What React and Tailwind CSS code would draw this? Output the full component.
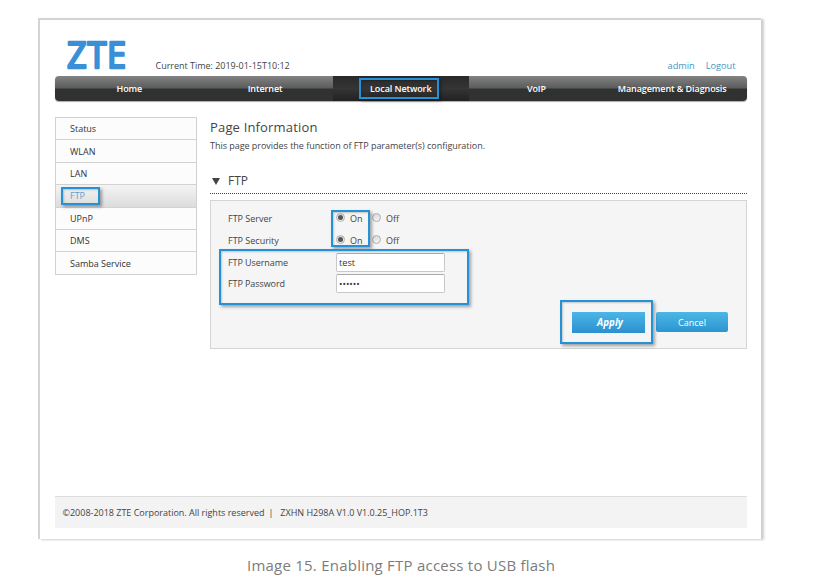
import { useState } from "react";

const tabs = ["Home", "Internet", "Local Network", "VoIP", "Management & Diagnosis"];
const menu = ["Status", "WLAN", "LAN", "FTP", "UPnP", "DMS", "Samba Service"];

// Blue callout frame laid over the part of the page being explained
function Callout({ className }) {
  return (
    <div
      className={`pointer-events-none absolute border-2 border-[#2492d8] shadow-[2px_2px_3px_rgba(0,0,0,0.35),inset_1px_1px_2px_rgba(0,0,0,0.2)] ${className}`}
    />
  );
}

function Logo() {
  return (
    <svg width="72" height="54" viewBox="0 0 72 54" className="block overflow-visible">
      <text
        x="0 22 43"
        y="39.5"
        transform="scale(0.93 1)"
        fontFamily="Open Sans, sans-serif"
        fontSize="37"
        fontWeight="400"
        fill="#3a8fd6"
        stroke="#3a8fd6"
        strokeWidth="2.4"
        strokeLinejoin="round"
      >
        ZTE
      </text>
    </svg>
  );
}

function Radio({ checked, onChange }) {
  return (
    <button
      type="button"
      onClick={onChange}
      className="mb-[3px] flex size-[9px] items-center justify-center rounded-full border border-[#b0b0b0] bg-linear-to-b from-[#dadada] to-[#f4f4f4]"
    >
      {checked && <span className="size-[5px] rounded-full bg-[#555]" />}
    </button>
  );
}

function OnOff({ label }) {
  const [on, setOn] = useState(true);

  return (
    <div className="flex h-[21.7px] items-center">
      <span className="w-[108px]">{label}</span>
      <Radio checked={on} onChange={() => setOn(true)} />
      <span className="ml-[5px] w-[22px]">On</span>
      <Radio checked={!on} onChange={() => setOn(false)} />
      <span className="ml-[5px]">Off</span>
    </div>
  );
}

function Field({ label, type, value }) {
  return (
    <div className="flex h-[21.7px] items-center">
      <span className="w-[108px] tracking-[-0.08px]">{label}</span>
      <input
        type={type}
        defaultValue={value}
        className="h-[19px] w-[109px] rounded-[2px] border border-[#c8c8c8] border-t-[#aaa] bg-white px-[2px] text-[9.2px] text-[#333] outline-none"
      />
    </div>
  );
}

export default function App() {
  return (
    <div className="h-[585px] w-[832px] overflow-hidden bg-white pt-[18px] pl-[38px] font-['Open_Sans','Noto_Sans',sans-serif] text-[9px] leading-none text-[#444]">
      <div className="relative flex h-[521px] w-[723px] flex-col border-t-2 border-l-2 border-[#d4d4d4] bg-white pr-[14px] pl-[14.5px] shadow-[3px_1px_2px_#cfcfcf]">
        <header className="flex h-[56px] shrink-0 items-end pb-[4px]">
          <div className="-mb-[11px] ml-[12px] w-[89px]">
            <Logo />
          </div>
          <span className="mb-[2px] text-[9px] tracking-[-0.02px]">Current Time: 2019-01-15T10:12</span>
          <div className="mr-[11.5px] mb-[2px] ml-auto flex gap-[11px] text-[9.2px] text-[#4596c4]">
            <a>admin</a>
            <a>Logout</a>
          </div>
        </header>

        <nav className="flex h-[25px] shrink-0 rounded-[4px] bg-linear-to-b from-[#838383] from-0% via-[#5c5c5c] via-48% to-[#303231] to-52% px-[7px] text-white shadow-[0_1px_1px_#aaa]">
          {tabs.map((tab) => (
            <a
              key={tab}
              className={`flex flex-1 basis-0 items-center justify-center pb-[1px] font-semibold tracking-[-0.09px] whitespace-nowrap ${
                tab === "Local Network" ? "bg-linear-to-b from-[#292929] via-[#353535] to-[#222]" : ""
              }`}
            >
              {tab}
            </a>
          ))}
        </nav>

        <div className="mt-[16px] flex gap-[13.5px]">
          <aside className="h-[158px] w-[142px] shrink-0 border border-[#d2d2d2] bg-[#fcfcfc]">
            {menu.map((item) => (
              <a
                key={item}
                className={`flex h-[22.4px] items-center border-b border-[#d2d2d2] pl-[14.5px] last:border-b-0 ${
                  item === "FTP" ? "bg-linear-to-b from-[#f4f4f4] to-[#dcdcdc] text-[#5a9fd0]" : "text-[#333]"
                }`}
              >
                {item}
              </a>
            ))}
          </aside>

          <main className="min-w-0 flex-1">
            <h1 className="mt-[3px] text-[13px] leading-[14px] tracking-[0.17px]">Page Information</h1>
            <p className="mt-[7px] leading-[10px] tracking-[-0.03px]">
              This page provides the function of FTP parameter(s) configuration.
            </p>
            <div className="mt-[19px] flex h-[24px] items-center border-b border-dotted border-[#444] pb-[1px]">
              <svg width="8" height="7" viewBox="0 0 8 7" className="ml-[2px]">
                <path d="M0 0h8L4 7z" fill="#444" />
              </svg>
              <h2 className="ml-[8px] text-[12px]">FTP</h2>
            </div>

            <section className="mt-[6px] h-[149px] border border-[#d5d5d5] bg-[#f5f5f5] pt-[7px] pl-[17px]">
              <OnOff label="FTP Server" />
              <OnOff label="FTP Security" />
              <Field label="FTP Username" type="text" value="test" />
              <Field label="FTP Password" type="password" value="secret" />
              <div className="mt-[17px] mr-[18px] flex justify-end gap-[11px] text-white">
                <button className="h-[21px] w-[73px] bg-linear-to-b from-[#4cb6e6] to-[#2b90cf] pt-[1px] pl-[3px] text-[9.8px] font-bold italic">
                  Apply
                </button>
                <button className="h-[20px] w-[72px] rounded-[2px] bg-linear-to-b from-[#4cb6e6] to-[#2b95d0] pt-[1px]">
                  Cancel
                </button>
              </div>
            </section>
          </main>
        </div>

        <footer className="mt-auto mb-[11px] flex h-[32px] items-center border-t border-[#dedede] bg-[#f3f3f3] pl-[8px] tracking-[-0.01px] whitespace-pre">
          <span>©2008-2018 ZTE Corporation. All rights reserved</span>
          <span className="ml-[4px]">|</span>
          <span className="ml-[7px]">ZXHN H298A V1.0 V1.0.25_HOP.1T3</span>
        </footer>

        <Callout className="top-[58px] left-[319px] h-[21px] w-[80px]" />
        <Callout className="top-[167px] left-[21px] h-[18px] w-[39px]" />
        <Callout className="top-[190px] left-[291px] h-[37px] w-[39px]" />
        <Callout className="top-[229px] left-[179px] h-[56px] w-[250px]" />
        <Callout className="top-[280px] left-[520px] h-[44px] w-[93px]" />
      </div>

      <p className="mt-[19px] ml-[209px] text-[15px] tracking-[0.23px] whitespace-nowrap text-[#7c7c7c]">
        Image 15. Enabling FTP access to USB flash
      </p>
    </div>
  );
}
